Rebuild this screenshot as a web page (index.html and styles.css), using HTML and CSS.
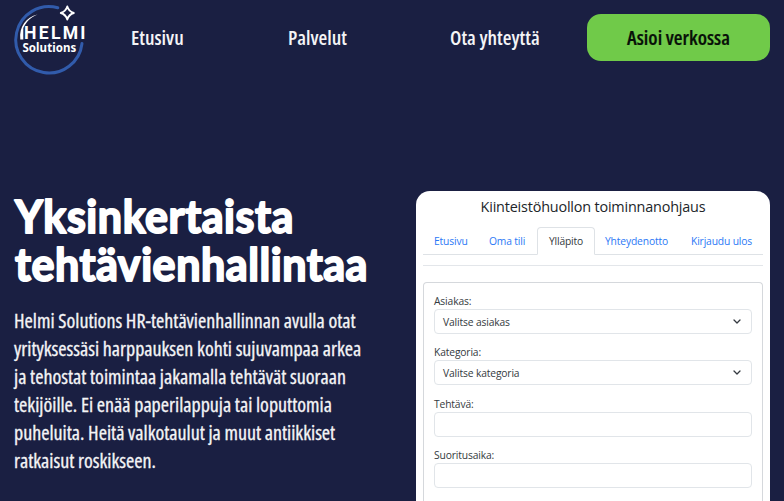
FILE: index.html
```html
<!DOCTYPE html>
<html lang="fi">
<head>
<meta charset="utf-8">
<title>Helmi Solutions</title>
<link rel="stylesheet" href="styles.css">
</head>
<body>
<header class="header">
  <svg class="logo" viewBox="0 0 70 70" role="img" aria-label="Helmi Solutions">
    <path class="logo-ring" d="M43.800 2.800A33.200 33.200 0 1 0 68 38.500"/>
    <path class="logo-arc" d="M23.500 9.600C12 12 5 22 6.300 34.500L9.300 34.500L9.300 23C12.500 17 16 12.500 23.500 9.600Z"/>
    <path class="logo-star" d="M53.300 1.500Q54.800 6.500 59.800 8Q54.800 9.500 53.300 14.500Q51.800 9.500 46.800 8Q51.800 6.500 53.300 1.500Z"/>
    <text class="logo-name" x="10" y="34.300" textLength="61.500" lengthAdjust="spacing">HELMI</text>
    <text class="logo-sub" x="8.400" y="47.400" textLength="54" lengthAdjust="spacing">Solutions</text>
  </svg>
  <nav class="nav">
    <a class="nav-home">Etusivu</a>
    <a class="nav-services">Palvelut</a>
    <a class="nav-contact">Ota yhteyttä</a>
  </nav>
  <a class="cta">Asioi verkossa</a>
</header>
<main class="hero">
  <section class="intro">
    <h1 class="title">
      <svg class="title-lines" viewBox="0 0 370 100">
        <text x="1" y="42" textLength="279" lengthAdjust="spacingAndGlyphs">Yksinkertaista</text>
        <text x="1" y="90" textLength="353" lengthAdjust="spacingAndGlyphs">tehtävienhallintaa</text>
      </svg>
    </h1>
    <p class="lead">Helmi Solutions HR-tehtävienhallinnan avulla otat<br>yrityksessäsi harppauksen kohti sujuvampaa arkea<br>ja tehostat toimintaa jakamalla tehtävät suoraan<br>tekijöille. Ei enää paperilappuja tai loputtomia<br>puheluita. Heitä valkotaulut ja muut antiikkiset<br>ratkaisut roskikseen.</p>
  </section>
  <section class="panel">
    <h2 class="panel-title">Kiinteistöhuollon toiminnanohjaus</h2>
    <div class="tabs">
      <a class="tab tab-home">Etusivu</a>
      <a class="tab tab-own">Oma tili</a>
      <a class="tab tab-active">Ylläpito</a>
      <a class="tab tab-contact">Yhteydenotto</a>
      <a class="tab tab-logout">Kirjaudu ulos</a>
    </div>
    <div class="rule"></div>
    <form class="form">
      <div class="group">
        <div class="label">Asiakas:</div>
        <div class="field"><span>Valitse asiakas</span><svg class="chevron" viewBox="0 0 8 5"><path d="M1 1L4 4L7 1"/></svg></div>
      </div>
      <div class="group">
        <div class="label">Kategoria:</div>
        <div class="field"><span>Valitse kategoria</span><svg class="chevron" viewBox="0 0 8 5"><path d="M1 1L4 4L7 1"/></svg></div>
      </div>
      <div class="group">
        <div class="label">Tehtävä:</div>
        <div class="field"></div>
      </div>
      <div class="group">
        <div class="label">Suoritusaika:</div>
        <div class="field"></div>
      </div>
    </form>
  </section>
</main>
</body>
</html>
```
FILE: styles.css
```css
* { box-sizing: border-box; }
html, body { height: 100%; }
body {
  margin: 0;
  overflow: hidden;
  background: #1a1f42;
  color: #f4f4f6;
  font-family: "Open Sans", "Noto Sans", sans-serif;
}
.header {
  display: flex;
  align-items: center;
  height: 75px;
  padding: 0 14px;
}
.logo { width: 70px; height: 70px; margin-top: 5px; overflow: visible; }
.logo-ring { fill: none; stroke: #315bab; stroke-width: 3; stroke-linecap: round; }
.logo-arc { fill: #fff; }
.logo-star { fill: none; stroke: #fff; stroke-width: 1.9; stroke-linejoin: round; }
.logo-name, .logo-sub { fill: #fff; font-family: "Noto Sans", sans-serif; font-weight: 700; }
.logo-name { font-family: Roboto, sans-serif; font-size: 17.6px; }
.logo-sub { font-size: 11.5px; }
.nav {
  display: flex;
  flex: 1;
  margin-left: 47px;
  padding-top: 1px;
  font-size: 20px;
  font-weight: 600;
  font-stretch: 75%;
  line-height: 28px;
  white-space: nowrap;
}
.nav-home { width: 157px; }
.nav-services { width: 162px; }
.cta {
  width: 183px;
  height: 47px;
  border-radius: 14px;
  background: #70ca49;
  color: #081008;
  font-size: 20px;
  font-weight: 600;
  font-stretch: 75%;
  -webkit-text-stroke: 0.2px #081008;
  line-height: 48px;
  text-align: center;
}
.hero {
  display: grid;
  grid-template-columns: 402px 354px;
  grid-template-rows: 310px;
  padding: 116px 14px 0;
}
.title { margin: 0; height: 116px; }
.title-lines {
  display: block;
  width: 370px;
  height: 100px;
  overflow: visible;
  fill: #fff;
  stroke: #fff;
  stroke-width: 2;
  stroke-linejoin: round;
  font-family: Lato, sans-serif;
  font-size: 45.5px;
  font-weight: 700;
  letter-spacing: 0.6px;
}
.lead {
  margin: 0;
  font-size: 20px;
  font-weight: 500;
  font-stretch: 75%;
  -webkit-text-stroke: 0.3px #f4f4f6;
  line-height: 28px;
  white-space: nowrap;
}
.panel {
  padding: 0 7px;
  border-radius: 14px 14px 0 0;
  background: #fff;
  color: #343a40;
  font-size: 10.3px;
  letter-spacing: -0.15px;
}
.panel-title {
  margin: 0;
  height: 36px;
  color: #212529;
  font-size: 14.4px;
  font-weight: 400;
  letter-spacing: -0.18px;
  line-height: 31px;
  text-align: center;
  white-space: nowrap;
}
.tabs {
  display: flex;
  height: 28px;
  border-bottom: 1px solid #dee2e6;
  color: #2b78f6;
  line-height: 28px;
  white-space: nowrap;
}
.tab-home { width: 66px; padding-left: 11px; }
.tab-own { width: 48px; }
.tab-active {
  width: 58px;
  height: 28px;
  border: 1px solid #dee2e6;
  border-bottom-color: #fff;
  border-radius: 4px 4px 0 0;
  background: #fff;
  color: #343a40;
  line-height: 26px;
  text-align: center;
}
.tab-contact { width: 96px; padding-left: 10px; }
.rule { height: 1px; margin-top: 10px; background: #e3e6ea; }
.form {
  height: 219px;
  margin: 16px 0 0;
  padding: 10px 10px 0;
  border: 1px solid #d5d8dc;
  border-bottom: 0;
  border-radius: 4px 4px 0 0;
}
.group { height: 51.4px; }
.label { height: 16px; line-height: 17px; }
.field {
  display: flex;
  align-items: center;
  justify-content: space-between;
  height: 25px;
  padding: 0 10px 0 8px;
  border: 1px solid #e1e5e9;
  border-radius: 4px;
}
.field span { letter-spacing: -0.15px; }
.chevron { width: 8px; height: 5px; fill: none; stroke: #343a40; stroke-width: 1.3; stroke-linecap: round; stroke-linejoin: round; }
```
